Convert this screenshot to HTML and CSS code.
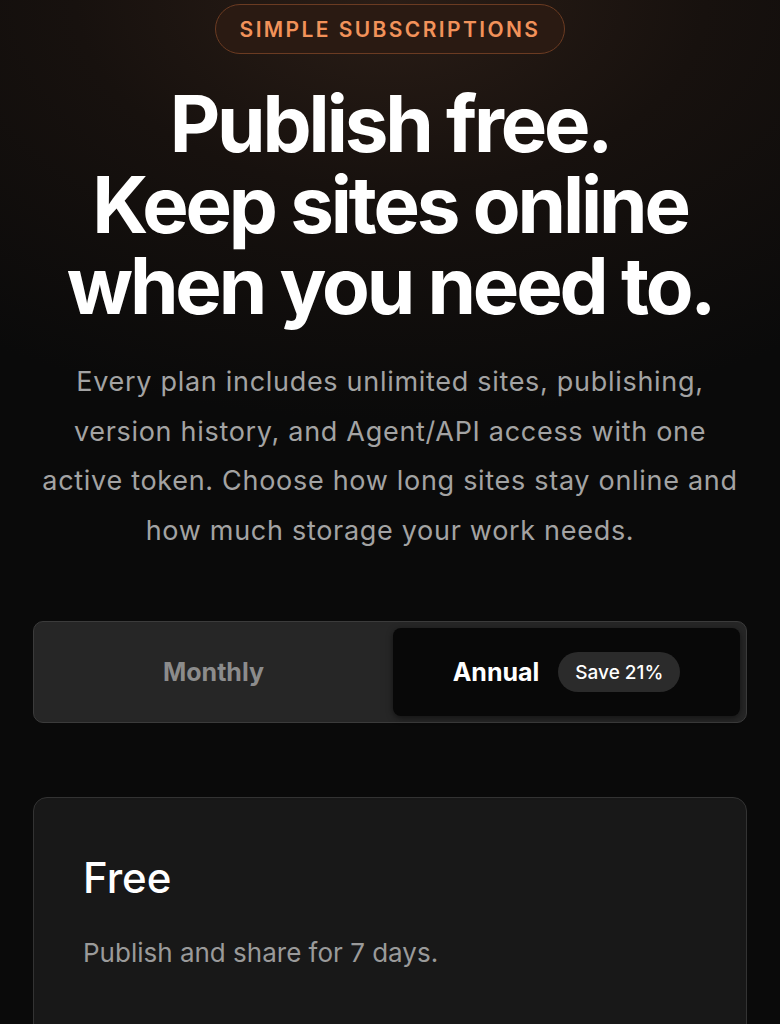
FILE: index.html
```html
<!DOCTYPE html>
<html lang="en">
<head>
<meta charset="utf-8">
<link rel="stylesheet" href="styles.css">
</head>
<body>
<main class="page">
  <section class="hero">
    <div class="badge">SIMPLE SUBSCRIPTIONS</div>
    <h1 class="title">Publish free.<br>Keep sites online<br>when you need to.</h1>
    <p class="lead">Every plan includes unlimited sites, publishing, version history, and Agent/API access with one active token. Choose how long sites stay online and how much storage your work needs.</p>
  </section>
  <div class="toggle">
    <button class="opt">Monthly</button>
    <button class="opt active">Annual <span class="save">Save 21%</span></button>
  </div>
  <section class="card">
    <h2 class="plan">Free</h2>
    <p class="plan-desc">Publish and share for 7 days.</p>
  </section>
</main>
</body>
</html>
```

FILE: styles.css
```css
html, body {
  margin: 0;
  padding: 0;
}
body {
  background: #0a0a0a radial-gradient(ellipse 700px 420px at 50% 0%, #2a1d16 0%, #17110e 45%, #0a0a0a 100%) no-repeat;
  color: #fff;
  font-family: Inter, "Noto Sans", sans-serif;
  min-height: 1024px;
}
.page {
  padding: 4px 33px 0;
  display: flex;
  flex-direction: column;
}
.hero {
  display: flex;
  flex-direction: column;
  align-items: center;
  text-align: center;
}
.badge {
  box-sizing: border-box;
  height: 50px;
  padding: 0 24px;
  display: flex;
  align-items: center;
  border: 1.5px solid #6b3b22;
  background: #2a1a12;
  border-radius: 25px;
  color: #f2925a;
  font-size: 21px;
  font-weight: 600;
  letter-spacing: 2.4px;
}
.title {
  margin: 29px 0 0;
  font-size: 78px;
  font-weight: 700;
  letter-spacing: -0.04em;
  line-height: 81px;
}
.lead {
  margin: 31px 0 0;
  font-size: 27px;
  letter-spacing: 0.7px;
  line-height: 49.5px;
  color: #a3a3a3;
  max-width: 710px;
}
.toggle {
  margin-top: 66px;
  box-sizing: border-box;
  height: 102px;
  display: grid;
  grid-template-columns: 1fr 1fr;
  padding: 6px;
  gap: 6px;
  background: #262626;
  border: 1.5px solid #3b3b3b;
  border-radius: 10px;
}
.opt {
  border: 0;
  background: transparent;
  font-family: inherit;
  font-size: 25px;
  font-weight: 700;
  color: #8c8c8c;
  display: flex;
  align-items: center;
  justify-content: center;
  gap: 19px;
  border-radius: 8px;
  padding: 0;
}
.opt.active {
  background: #080808;
  color: #fff;
  box-shadow: 0 2px 6px rgba(0,0,0,0.5);
}
.save {
  background: #2b2b2b;
  border-radius: 20px;
  font-size: 19px;
  font-weight: 500;
  padding: 0 17px;
  height: 40px;
  display: flex;
  align-items: center;
}
.card {
  margin-top: 74px;
  background: #181818;
  border: 1.5px solid #333;
  border-radius: 14px;
  padding: 56px 49px 60px;
  min-height: 260px;
}
.plan {
  margin: 0;
  font-size: 42px;
  font-weight: 500;
  line-height: 48px;
}
.plan-desc {
  margin: 35px 0 0;
  font-size: 26px;
  color: #9a9a9a;
}
```
